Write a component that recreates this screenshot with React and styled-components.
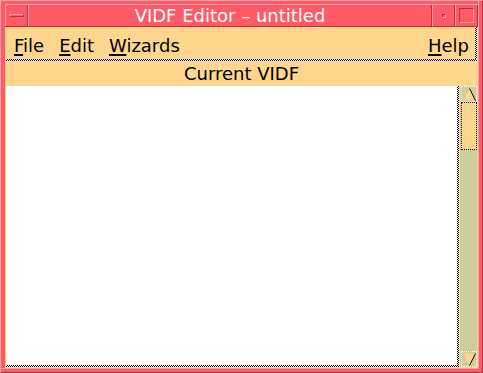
import React from 'react';
import styled, { createGlobalStyle } from 'styled-components';

// palette (CDE-ish window)
const RED = '#ff5a66';
const RED_LIGHT = '#ffa0a8';
const RED_DARK = '#b8323e';
const PEACH = '#ffd68e';
const OLIVE = '#cece9b';
const checker = 'repeating-conic-gradient(#000 0 25%, #fff 0 50%)';

const GlobalStyle = createGlobalStyle`
  html, body {
    margin: 0;
    padding: 0;
    background: #fff;
  }
  body {
    font-family: "DejaVu Sans", "Liberation Sans", sans-serif;
  }
`;

const Window = styled.div`
  box-sizing: border-box;
  width: 483px;
  height: 373px;
  display: flex;
  flex-direction: column;
  background: ${RED};
  border-top: 1px solid ${RED_LIGHT};
  border-left: 1px solid ${RED_LIGHT};
  border-right: 1px solid ${RED_DARK};
  border-bottom: 1px solid ${RED_DARK};
  padding: 4px;
  box-shadow: inset -3px -3px 0 ${RED}, inset -4px -4px 0 ${RED_LIGHT};
`;

const TitleBar = styled.div`
  display: flex;
  height: 23px;
  box-sizing: border-box;
  border-bottom: 1px solid ${RED_DARK};
  border-top: 1px solid ${RED_LIGHT};
  margin-top: -1px;
`;

const TitleButton = styled.div`
  box-sizing: border-box;
  width: 23px;
  flex: none;
  display: flex;
  align-items: center;
  justify-content: center;
  border-left: 1px solid ${RED_LIGHT};
  border-right: 1px solid ${RED_DARK};
`;

const MinBar = styled.div`
  width: 15px;
  height: 3px;
  box-sizing: border-box;
  border-top: 1px solid ${RED_LIGHT};
  border-left: 1px solid ${RED_LIGHT};
  border-bottom: 1px solid ${RED_DARK};
  border-right: 1px solid ${RED_DARK};
`;

const Dot = styled.div`
  width: 4px;
  height: 4px;
  box-sizing: border-box;
  border-top: 1px solid ${RED_DARK};
  border-left: 1px solid ${RED_DARK};
  border-bottom: 1px solid ${RED_LIGHT};
  border-right: 1px solid ${RED_LIGHT};
  background: ${RED};
  margin-top: 1px;
`;

const MaxBox = styled.div`
  width: 15px;
  height: 15px;
  box-sizing: border-box;
  border-top: 1px solid ${RED_DARK};
  border-left: 1px solid ${RED_DARK};
  border-bottom: 1px solid ${RED_LIGHT};
  border-right: 1px solid ${RED_LIGHT};
`;

const Title = styled.div`
  flex: 1;
  display: flex;
  align-items: center;
  justify-content: center;
  color: #fff;
  font-size: 18px;
  border-left: 1px solid ${RED_LIGHT};
  border-right: 1px solid ${RED_DARK};
`;

const Client = styled.div`
  flex: 1;
  display: flex;
  flex-direction: column;
  background: ${PEACH};
  padding: 0 1px 1px 1px;
  min-height: 0;
`;

const MenuBar = styled.div`
  box-sizing: border-box;
  height: 34px;
  display: flex;
  align-items: center;
  gap: 15px;
  padding: 2px 8px 0 8px;
  font-size: 18px;
  color: #000;
  background:
    ${checker} left bottom / 2px 2px repeat-x,
    ${checker} right top / 2px 2px repeat-y,
    ${PEACH};
`;

const MenuItem = styled.span`
  margin-left: ${(p) => (p.$right ? 'auto' : '0')};
`;

const Mnemonic = styled.span`
  text-decoration: underline;
  text-decoration-thickness: 2px;
  text-underline-offset: 2px;
`;

const Header = styled.div`
  height: 25px;
  display: flex;
  align-items: center;
  justify-content: center;
  font-size: 18px;
  color: #000;
`;

const Body = styled.div`
  flex: 1;
  display: flex;
  min-height: 0;
`;

const Canvas = styled.div`
  flex: 1;
  background:
    ${checker} left bottom / 2px 2px repeat-x,
    ${checker} right top / 2px 2px repeat-y,
    #fff;
`;

const ScrollBar = styled.div`
  width: 18px;
  flex: none;
  display: flex;
  flex-direction: column;
  background: ${OLIVE};
  box-sizing: border-box;
  padding-left: 1px;
  border-left: 1px solid ${PEACH};
`;

const Arrow = styled.div`
  height: 16px;
  flex: none;
  box-sizing: border-box;
  border: 1px dotted #fff;
  display: flex;
  align-items: center;
  justify-content: center;
`;

const ArrowSvg = styled.svg`
  flex: none;
  display: block;
  width: 13px;
  height: 13px;
`;

const Thumb = styled.div`
  height: 48px;
  flex: none;
  box-sizing: border-box;
  background: ${PEACH};
  border: 1px dotted #000;
`;

const Track = styled.div`
  flex: 1;
`;

const ArrowIcon = ({ down }) => (
  <ArrowSvg viewBox="0 0 13 13">
    {down ? (
      <>
        <polygon points="0.5,0.5 12.5,0.5 6.5,12.5" fill={PEACH} />
        <line x1="12.5" y1="0.5" x2="6.5" y2="12.5" stroke="#000" strokeWidth="1" />
      </>
    ) : (
      <>
        <polygon points="6.5,0.5 12.5,12.5 0.5,12.5" fill={PEACH} />
        <line x1="6.5" y1="0.5" x2="12.5" y2="12.5" stroke="#000" strokeWidth="1" />
      </>
    )}
  </ArrowSvg>
);

const App = () => {
  return (
    <>
      <GlobalStyle />
      <Window>
        <TitleBar>
          <TitleButton>
            <MinBar />
          </TitleButton>
          <Title>VIDF Editor – untitled</Title>
          <TitleButton>
            <Dot />
          </TitleButton>
          <TitleButton>
            <MaxBox />
          </TitleButton>
        </TitleBar>
        <Client>
          <MenuBar>
            <MenuItem><Mnemonic>F</Mnemonic>ile</MenuItem>
            <MenuItem><Mnemonic>E</Mnemonic>dit</MenuItem>
            <MenuItem><Mnemonic>W</Mnemonic>izards</MenuItem>
            <MenuItem $right><Mnemonic>H</Mnemonic>elp</MenuItem>
          </MenuBar>
          <Header>Current VIDF</Header>
          <Body>
            <Canvas />
            <ScrollBar>
              <Arrow>
                <ArrowIcon />
              </Arrow>
              <Thumb />
              <Track />
              <Arrow>
                <ArrowIcon down />
              </Arrow>
            </ScrollBar>
          </Body>
        </Client>
      </Window>
    </>
  );
};

export default App;
